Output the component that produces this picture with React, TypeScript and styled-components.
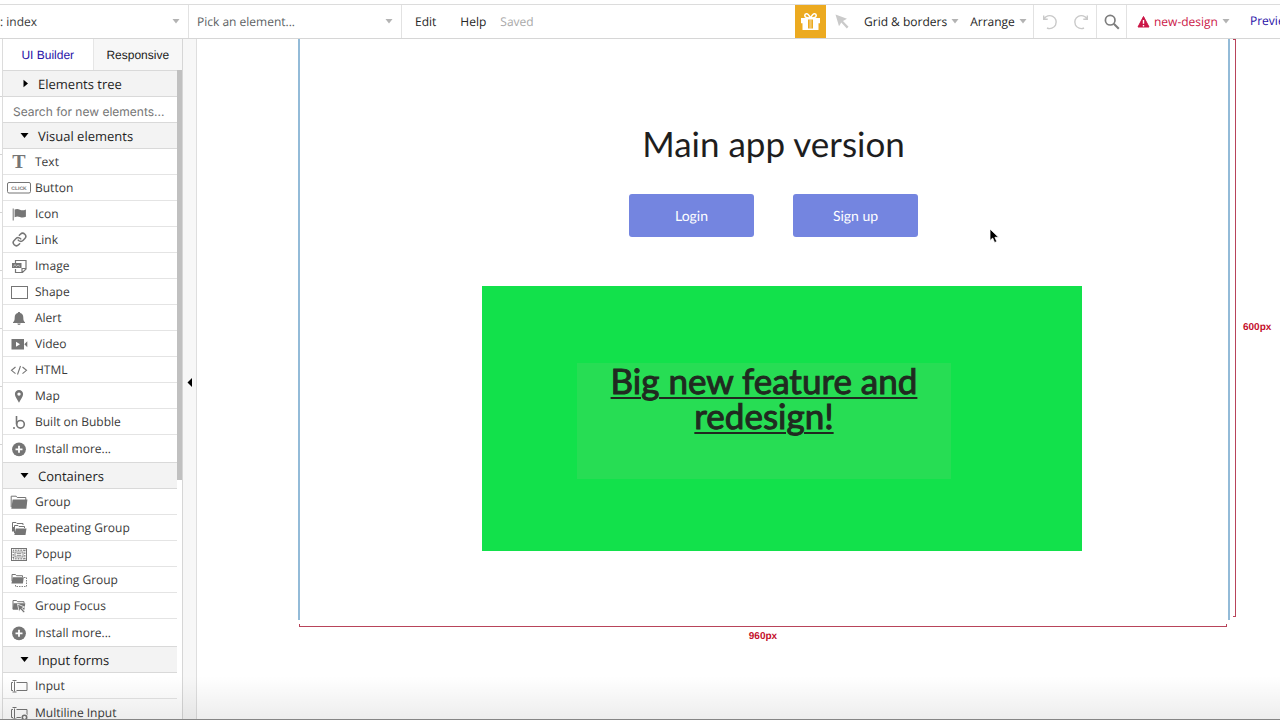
import React from 'react';
import styled, { createGlobalStyle } from 'styled-components';
import { Link as LinkIcon } from 'lucide-react';

const sans = `"Open Sans", "Noto Sans", sans-serif`;
const arial = `"Liberation Sans", Arial, sans-serif`;
const lato = `Lato, "Open Sans", sans-serif`;

const GlobalStyle = createGlobalStyle`
  *, *::before, *::after { box-sizing: border-box; }
  body { margin: 0; background: #fff; font-family: ${sans}; color: #3a3a3a; text-rendering: geometricPrecision; }
  button, input, select { font: inherit; color: inherit; margin: 0; padding: 0; border: 0; background: none; border-radius: 0; text-rendering: inherit; }
  svg { display: block; flex: none; }
`;

const Page = styled.div`
  position: relative;
  display: flex;
  flex-direction: column;
  height: 100vh;
  overflow: hidden;
  padding-top: 4px;
`;

/* Toolbar */

const Toolbar = styled.header`
  display: flex;
  flex: none;
  height: 35px;
  border-top: 1px solid #dcdcdc;
  border-bottom: 1px solid #d6d6d6;
  font-size: 12px;
  line-height: 16px;
`;

const Picker = styled.label<{ $width: number }>`
  display: flex;
  align-items: center;
  flex: none;
  width: ${(p) => p.$width}px;
  padding-right: 8px;
  border-right: 1px solid #e2e2e2;
`;

const PickerSelect = styled.select<{ $muted?: boolean }>`
  appearance: none;
  flex: 1;
  min-width: 0;
  height: 32px;
  padding-left: ${(p) => (p.$muted ? 8 : 0)}px;
  color: ${(p) => (p.$muted ? '#5c5f63' : '#3a3a3a')};
  outline: none;
`;

const Menus = styled.nav`
  display: flex;
  align-items: center;
  padding-left: 13px;
`;

const MenuButton = styled.button<{ $gap?: number; $color?: string }>`
  display: flex;
  align-items: center;
  flex: none;
  gap: 4px;
  height: 32px;
  margin-right: ${(p) => p.$gap ?? 0}px;
  color: ${(p) => p.$color ?? '#262626'};
  white-space: nowrap;
`;

const Saved = styled.span`
  color: #a9a9a9;
`;

const Tools = styled.div`
  display: flex;
  flex: none;
  margin-left: auto;
`;

const GiftButton = styled.button`
  display: grid;
  place-items: center;
  width: 31px;
  background: #ecaa20;
`;

const ToolCell = styled.div<{ $width: number; $gap?: number }>`
  display: flex;
  align-items: center;
  flex: none;
  gap: ${(p) => p.$gap ?? 0}px;
  width: ${(p) => p.$width}px;
  border-right: 1px solid #e2e2e2;
`;

const IconButton = styled.button<{ $width: number }>`
  display: grid;
  place-items: center;
  width: ${(p) => p.$width}px;
  height: 32px;
`;

const VersionCell = styled.div`
  display: flex;
  align-items: center;
  flex: none;
  width: 123px;
  padding-left: 10px;
`;

const PreviewLink = styled.a`
  flex: none;
  width: 30px;
  overflow: hidden;
  color: #2a12a8;
  line-height: 32px;
  text-decoration: none;
  white-space: nowrap;
`;

/* Workspace */

const Workspace = styled.div`
  display: flex;
  flex: 1;
  min-height: 0;
`;

const Rail = styled.div`
  display: flex;
  flex-direction: column;
  flex: none;
  width: 3px;
  border-right: 1px solid #dcdcdc;
`;

const RailItem = styled.span`
  flex: none;
  height: 58px;
  border-bottom: 1px solid #d4d4d4;
`;

const Sidebar = styled.aside`
  display: flex;
  flex-direction: column;
  flex: none;
  width: 180px;
  border-right: 1px solid #d6d6d6;
`;

const Tabs = styled.div`
  display: grid;
  grid-template-columns: 1fr 1fr;
  flex: none;
  height: 31px;
`;

const Tab = styled.button<{ $active?: boolean }>`
  border-left: ${(p) => (p.$active ? 0 : 1)}px solid #e6e6e6;
  background: ${(p) => (p.$active ? '#fff' : '#f7f7f7')};
  color: ${(p) => (p.$active ? '#2a12a8' : '#1c1c1c')};
  font-family: ${arial};
  font-size: 12px;
`;

const Scroller = styled.div`
  display: flex;
  flex: 1;
  min-height: 0;
`;

const Palette = styled.div`
  flex: 1;
  min-width: 0;
  overflow: hidden;
`;

const ScrollThumb = styled.div`
  flex: none;
  width: 5px;
  height: 63%;
  background: #c0c0c0;
`;

const SectionHeader = styled.button<{ $first?: boolean }>`
  display: flex;
  align-items: center;
  gap: 9px;
  width: 100%;
  height: 27px;
  margin-top: ${(p) => (p.$first ? 0 : -1)}px;
  padding-left: 17px;
  border-top: 1px solid #d9d9d9;
  border-bottom: 1px solid #d9d9d9;
  background: #f3f3f3;
  color: #1f1f1f;
  font-size: 13px;
`;

const SearchInput = styled.input`
  display: block;
  width: 100%;
  height: 26px;
  padding: 3px 0 0 10px;
  border-bottom: 1px solid #d9d9d9;
  color: #333;
  font-family: Inter, sans-serif;
  font-size: 12px;
  outline: none;
  &::placeholder { color: #757575; opacity: 1; }
`;

const ElementRow = styled.button`
  display: grid;
  grid-template-columns: 32px 1fr;
  align-items: center;
  width: 100%;
  height: 26px;
  border-bottom: 1px solid #e4e4e4;
  font-size: 12px;
  line-height: 16px;
  text-align: left;
  white-space: nowrap;

  &:last-child { height: 28px; }
`;

const IconSlot = styled.span`
  display: grid;
  place-items: center;
  color: #757575;
`;

const LetterGlyph = styled.span`
  font: 700 20px/24px "Liberation Serif", serif;
`;

const Gutter = styled.button`
  display: grid;
  place-items: center;
  flex: none;
  width: 14px;
  padding-top: 5px;
  border-right: 1px solid #dedede;
  background: #f7f7f7;
`;

/* Design canvas */

const Stage = styled.main`
  position: relative;
  display: grid;
  grid-template-columns: minmax(0, 1fr) 50px;
  grid-template-rows: 581px auto;
  flex: 1;
  min-width: 0;
  padding-left: 101px;
`;

const Frame = styled.div`
  display: flex;
  flex-direction: column;
  align-items: center;
  padding-top: 83px;
  border-left: 2px solid #93bbd8;
  border-right: 2px solid #93bbd8;
`;

const Hero = styled.div`
  display: flex;
  flex-direction: column;
  align-items: center;
  gap: 28px;
  padding-left: 19px;
`;

const Title = styled.h1`
  margin: 0;
  color: #1e1e1e;
  font: 400 35px/44px ${lato};
`;

const Actions = styled.div`
  display: flex;
  gap: 39px;
`;

const ActionButton = styled.button`
  width: 125px;
  height: 43px;
  border-radius: 3px;
  background: #7485e0;
  color: #fff;
  font: 400 14px/20px ${lato};
`;

const Banner = styled.div`
  width: 600px;
  height: 265px;
  margin: 49px 0 0 36px;
  padding: 77px 0 0 95px;
  background: #12e14b;
`;

const BannerText = styled.p`
  width: 374px;
  height: 116px;
  margin: 0;
  padding-top: 1px;
  background: #27dd54;
  color: #202a20;
  font: 400 35px/35px ${lato};
  -webkit-text-stroke: 1px #202a20;
  text-align: center;
  text-decoration: underline;
  text-decoration-thickness: 2px;
  text-underline-offset: 3px;
`;

const HeightRuler = styled.div`
  display: flex;
  align-items: center;
  gap: 7px;
  height: 578px;
  padding-left: 3px;
`;

const HeightBracket = styled.span`
  align-self: stretch;
  width: 3px;
  border: 1px solid #b8445a;
  border-left: 0;
`;

const WidthRuler = styled.div`
  display: flex;
  flex-direction: column;
  align-items: center;
  gap: 4px;
  padding: 4px 3px 0 1px;
`;

const WidthBracket = styled.span`
  align-self: stretch;
  height: 3px;
  border: 1px solid #b8445a;
  border-top: 0;
`;

const Measure = styled.span`
  color: #c4102c;
  font: 700 10px/12px ${arial};
`;

const Pointer = styled.svg`
  position: absolute;
  top: 189px;
  left: 792px;
`;

const BottomFade = styled.div`
  position: absolute;
  right: 0;
  bottom: 0;
  left: 0;
  height: 44px;
  border-bottom: 1px solid #858585;
  background: linear-gradient(rgba(0, 0, 0, 0), rgba(0, 0, 0, 0.07));
  pointer-events: none;
`;

/* Glyphs */

const Caret = ({ color = '#b3b3b3' }: { color?: string }) => (
  <svg width="8" height="5" viewBox="0 0 8 5"><path d="M0.5 0h7L4 4.6z" fill={color} /></svg>
);

const Disclosure = ({ open }: { open: boolean }) => (
  <svg width="9" height="9" viewBox="0 0 9 9">
    <path d={open ? 'M0.5 2h8l-4 5z' : 'M3.5 0.7v7.6L8 4.5z'} fill="#000" />
  </svg>
);

const Glyph = ({ children }: { children: React.ReactNode }) => (
  <svg width="24" height="18" viewBox="0 0 24 18" fill="none" aria-hidden="true">{children}</svg>
);

const ink = '#757575';

const inputShape = (
  <path d="M6 5.500H4.500v8H6M9.500 5.500h10.500v8H9.500M7.500 4.500v10M5.500 3.500h4M5.500 15h4" stroke={ink} />
);

const glyphs: Record<string, React.ReactNode> = {
  text: <LetterGlyph>T</LetterGlyph>,
  button: (
    <Glyph>
      <rect x="0.5" y="3.500" width="23" height="10.500" rx="1.500" stroke={ink} />
      <text x="12" y="11" textAnchor="middle" fontFamily="Liberation Sans, sans-serif" fontWeight="700" fontSize="5" fill={ink}>CLICK</text>
    </Glyph>
  ),
  flag: (
    <Glyph>
      <path d="M6.200 3.500v12" stroke={ink} />
      <path d="M7.600 4.600c2-1.100 3.600-.8 5.300.1 2 .9 3.800.7 6-.3v7.400c-2.200 1-4 1.100-6 .2-1.700-.8-3.300-.9-5.300.2z" fill={ink} />
    </Glyph>
  ),
  link: <LinkIcon size={15} strokeWidth={2.4} />,
  image: (
    <Glyph>
      <path d="M8.500 6V3.500h10.500v8.500l-3.500 3.500h-7V12M19 11.500h-4v4" stroke={ink} strokeWidth="1.200" />
      <rect x="5" y="6" width="9.500" height="5" fill={ink} />
      <path d="M6.500 9.500l1.500-2 1.500 2 1.500-1.500 2 1.500" stroke="#ddd" strokeWidth="0.700" />
    </Glyph>
  ),
  shape: <Glyph><rect x="4.500" y="3.500" width="16" height="12" stroke={ink} /></Glyph>,
  bell: (
    <Glyph>
      <path d="M12 3c.8 0 1.200.5 1.200 1.100 2 .5 3.100 2.100 3.100 4.300 0 2.700.4 3.700 1.700 4.900v.7H6v-.7c1.300-1.200 1.700-2.200 1.700-4.900 0-2.200 1.100-3.800 3.100-4.300C10.800 3.500 11.200 3 12 3z" fill={ink} />
      <path d="M10.300 14.500h3.400c-.2 1-.8 1.400-1.700 1.400s-1.500-.4-1.700-1.400z" fill={ink} />
    </Glyph>
  ),
  video: (
    <Glyph>
      <path d="M4.500 4h12.500v10.500H4.500zM17.300 9.200l3-3v6z" fill={ink} />
      <path d="M9 6.700v5l4-2.500z" fill="#fff" />
    </Glyph>
  ),
  html: <Glyph><path d="M8.500 6l-4 3.300 4 3.300M15.500 6l4 3.300-4 3.300M13.500 5l-3 8.500" stroke={ink} strokeWidth="1.100" /></Glyph>,
  map: <Glyph><path fillRule="evenodd" d="M12 3c-2.400 0-4.100 1.700-4.100 4 0 2.600 2.300 5.200 4.100 8.700 1.800-3.500 4.100-6.100 4.100-8.700 0-2.300-1.700-4-4.100-4zm0 2.400a1.700 1.700 0 1 1 0 3.400 1.700 1.700 0 0 1 0-3.400z" fill={ink} /></Glyph>,
  bubble: (
    <Glyph>
      <circle cx="13.500" cy="11.300" r="3.800" stroke={ink} strokeWidth="1.600" />
      <path d="M9.500 3v8.300" stroke={ink} strokeWidth="1.600" />
      <circle cx="7" cy="15" r="1" fill={ink} />
    </Glyph>
  ),
  plus: (
    <Glyph>
      <circle cx="12" cy="9.300" r="6.900" fill={ink} />
      <path d="M12 5.800v7M8.500 9.300h7" stroke="#fff" strokeWidth="1.800" />
    </Glyph>
  ),
  folder: (
    <Glyph>
      <path d="M4.200 14V3.200h5l1 1.300h8.600V7" stroke={ink} />
      <path d="M5.600 6.600h14.800l-1 9.200H4.300z" fill={ink} />
    </Glyph>
  ),
  folders: (
    <Glyph>
      <path d="M5.500 12V3.500h3.500l1 1h6V6" stroke={ink} />
      <path d="M7.500 14V6.500h3.500l1 1h5.500V9" stroke={ink} />
      <path d="M8.800 9.500h10.700l-1 6.500H7.300z" fill={ink} />
      <path d="M5 8h2v4.500H5z" fill={ink} />
    </Glyph>
  ),
  popup: (
    <Glyph>
      <rect x="4.500" y="3.500" width="15" height="12" stroke={ink} />
      <rect x="6.300" y="5.300" width="11.400" height="8.400" stroke={ink} strokeWidth="1.600" strokeDasharray="0.800 0.800" />
      <rect x="8" y="7" width="8" height="5" fill="#fff" stroke={ink} strokeWidth="0.800" />
      <path d="M9.700 8.600h4.600M9.700 10.400h4.600" stroke={ink} strokeWidth="0.800" />
    </Glyph>
  ),
  floating: (
    <Glyph>
      <path d="M5 10V3.500h3.500l1 1.200h6V6" stroke={ink} />
      <path d="M5.800 6.300h11l-.9 6.200H4.400z" fill={ink} />
      <path d="M17 6.500h2.500v9H8.500V13" stroke={ink} strokeDasharray="1.500 1" strokeWidth="0.900" />
    </Glyph>
  ),
  focus: (
    <Glyph>
      <path d="M6 12V3.500h3.500l1 1.200h6.500V6" stroke={ink} />
      <path d="M6.500 6.300H18.300l-.9 6.500H5.700z" fill={ink} />
      <path d="M10.500 7l7 3-2.600 1.200 3 3.300-1.400 1.400-3-3.400-1.300 2.500z" fill={ink} stroke="#fff" strokeWidth="0.800" />
    </Glyph>
  ),
  input: <Glyph>{inputShape}</Glyph>,
  multiline: (
    <Glyph>
      {inputShape}
      <circle cx="17.500" cy="13.500" r="3.700" fill="#fff" />
      <circle cx="17.500" cy="13.500" r="2.200" stroke={ink} strokeWidth="1.600" />
    </Glyph>
  ),
};

type Item = [icon: string, label: string];

const sections: { title: string; items: Item[] }[] = [
  {
    title: 'Visual elements',
    items: [
      ['text', 'Text'],
      ['button', 'Button'],
      ['flag', 'Icon'],
      ['link', 'Link'],
      ['image', 'Image'],
      ['shape', 'Shape'],
      ['bell', 'Alert'],
      ['video', 'Video'],
      ['html', 'HTML'],
      ['map', 'Map'],
      ['bubble', 'Built on Bubble'],
      ['plus', 'Install more...'],
    ],
  },
  {
    title: 'Containers',
    items: [
      ['folder', 'Group'],
      ['folders', 'Repeating Group'],
      ['popup', 'Popup'],
      ['floating', 'Floating Group'],
      ['focus', 'Group Focus'],
      ['plus', 'Install more...'],
    ],
  },
  {
    title: 'Input forms',
    items: [
      ['input', 'Input'],
      ['multiline', 'Multiline Input'],
    ],
  },
];

const TopBar = () => (
  <Toolbar>
    <Picker $width={189}>
      <PickerSelect aria-label="Page" defaultValue="index">
        <option value="index">: index</option>
      </PickerSelect>
      <Caret />
    </Picker>
    <Picker $width={213}>
      <PickerSelect $muted aria-label="Element" defaultValue="none">
        <option value="none">Pick an element...</option>
      </PickerSelect>
      <Caret />
    </Picker>
    <Menus>
      <MenuButton $gap={24}>Edit</MenuButton>
      <MenuButton $gap={14}>Help</MenuButton>
      <Saved>Saved</Saved>
    </Menus>
    <Tools>
      <GiftButton aria-label="Gifts">
        <svg width="21" height="19" viewBox="0 0 21 19">
          <path d="M1 6h19v5.200H18.500V18H2.500v-6.800H1z" fill="#fff" />
          <path d="M8 7.500h5v9H8z" fill="#ecaa20" />
          <path d="M9.300 7.500h2.400v9H9.300z" fill="#fff" opacity="0.350" />
          <path d="M10.500 6C9 2.800 7.700 1.500 6.300 1.700c-2 .3-2 3.300 0 3.800 1.200.4 2.700.4 4.200.5zM10.500 6c1.500-3.200 2.800-4.500 4.200-4.300 2 .3 2 3.300 0 3.800-1.200.4-2.700.4-4.200.5z" fill="none" stroke="#fff" strokeWidth="1.600" />
        </svg>
      </GiftButton>
      <ToolCell $width={208} $gap={6}>
        <IconButton $width={32} aria-label="Select">
          <svg width="14" height="15" viewBox="0 0 14 15"><path d="M0.500 0.500l11.500 4.200-4 2.300 5.500 5.700-1.700 1.700-5.500-5.800-2.300 3.700z" fill="#cacaca" /></svg>
        </IconButton>
        <MenuButton $gap={5}>
          Grid &amp; borders
          <Caret />
        </MenuButton>
        <MenuButton>
          Arrange
          <Caret />
        </MenuButton>
      </ToolCell>
      <ToolCell $width={63}>
        <IconButton $width={31} aria-label="Undo">
          <svg width="16" height="16" viewBox="0 0 16 16" fill="none" stroke="#c9c9c9" strokeWidth="1.400"><path d="M1.700 1.500v3.800h4M2 5A6.500 6.500 0 1 1 5 14" /></svg>
        </IconButton>
        <IconButton $width={31} aria-label="Redo">
          <svg width="16" height="16" viewBox="0 0 16 16" fill="none" stroke="#c9c9c9" strokeWidth="1.400"><path d="M14.300 1.500v3.800h-4M14 5A6.500 6.500 0 1 0 11 14" /></svg>
        </IconButton>
      </ToolCell>
      <ToolCell $width={30}>
        <IconButton $width={29} aria-label="Search">
          <svg width="16" height="16" viewBox="0 0 16 16" fill="none" stroke="#7d7d7d"><circle cx="6.200" cy="6.200" r="4.800" strokeWidth="1.700" /><path d="M9.800 9.800l5 5" strokeWidth="2" /></svg>
        </IconButton>
      </ToolCell>
      <VersionCell>
        <MenuButton $color="#cb1747">
          <svg width="13" height="12" viewBox="0 0 13 12">
            <path d="M6.500 0.500L12 11H1z" fill="#cb1747" stroke="#cb1747" strokeLinejoin="round" />
            <path d="M6.500 4v3.800M6.500 9v1.400" stroke="#fff" strokeWidth="1.400" />
          </svg>
          new-design
          <Caret />
        </MenuButton>
      </VersionCell>
      <PreviewLink href="#preview">Preview</PreviewLink>
    </Tools>
  </Toolbar>
);

const ElementPalette = () => (
  <Sidebar>
    <Tabs>
      <Tab $active>UI Builder</Tab>
      <Tab>Responsive</Tab>
    </Tabs>
    <Scroller>
      <Palette>
        <SectionHeader $first aria-expanded={false}>
          <Disclosure open={false} />
          Elements tree
        </SectionHeader>
        <SearchInput aria-label="Search for new elements" placeholder="Search for new elements..." />
        {sections.map((section) => (
          <section key={section.title}>
            <SectionHeader aria-expanded>
              <Disclosure open />
              {section.title}
            </SectionHeader>
            {section.items.map(([icon, label]) => (
              <ElementRow key={label}>
                <IconSlot>{glyphs[icon]}</IconSlot>
                {label}
              </ElementRow>
            ))}
          </section>
        ))}
      </Palette>
      <ScrollThumb />
    </Scroller>
  </Sidebar>
);

const DesignCanvas = () => (
  <Stage>
    <Frame>
      <Hero>
        <Title>Main app version</Title>
        <Actions>
          <ActionButton>Login</ActionButton>
          <ActionButton>Sign up</ActionButton>
        </Actions>
      </Hero>
      <Banner>
        <BannerText>Big new feature and redesign!</BannerText>
      </Banner>
    </Frame>
    <HeightRuler>
      <HeightBracket />
      <Measure>600px</Measure>
    </HeightRuler>
    <WidthRuler>
      <WidthBracket />
      <Measure>960px</Measure>
    </WidthRuler>
    <Pointer width="11" height="17" viewBox="0 0 11 17">
      <path d="M1 1v11.500l2.700-2.400 1.900 4.400 2.200-.9-1.900-4.300h3.700z" fill="#000" stroke="#fff" strokeWidth="0.800" />
    </Pointer>
  </Stage>
);

export default function App() {
  return (
    <Page>
      <GlobalStyle />
      <TopBar />
      <Workspace>
        <Rail>
          {Array.from({ length: 7 }, (_, i) => (
            <RailItem key={i} />
          ))}
        </Rail>
        <ElementPalette />
        <Gutter aria-label="Collapse panel">
          <svg width="5" height="9" viewBox="0 0 5 9"><path d="M5 0v9L0.500 4.500z" fill="#000" /></svg>
        </Gutter>
        <DesignCanvas />
      </Workspace>
      <BottomFade />
    </Page>
  );
}
